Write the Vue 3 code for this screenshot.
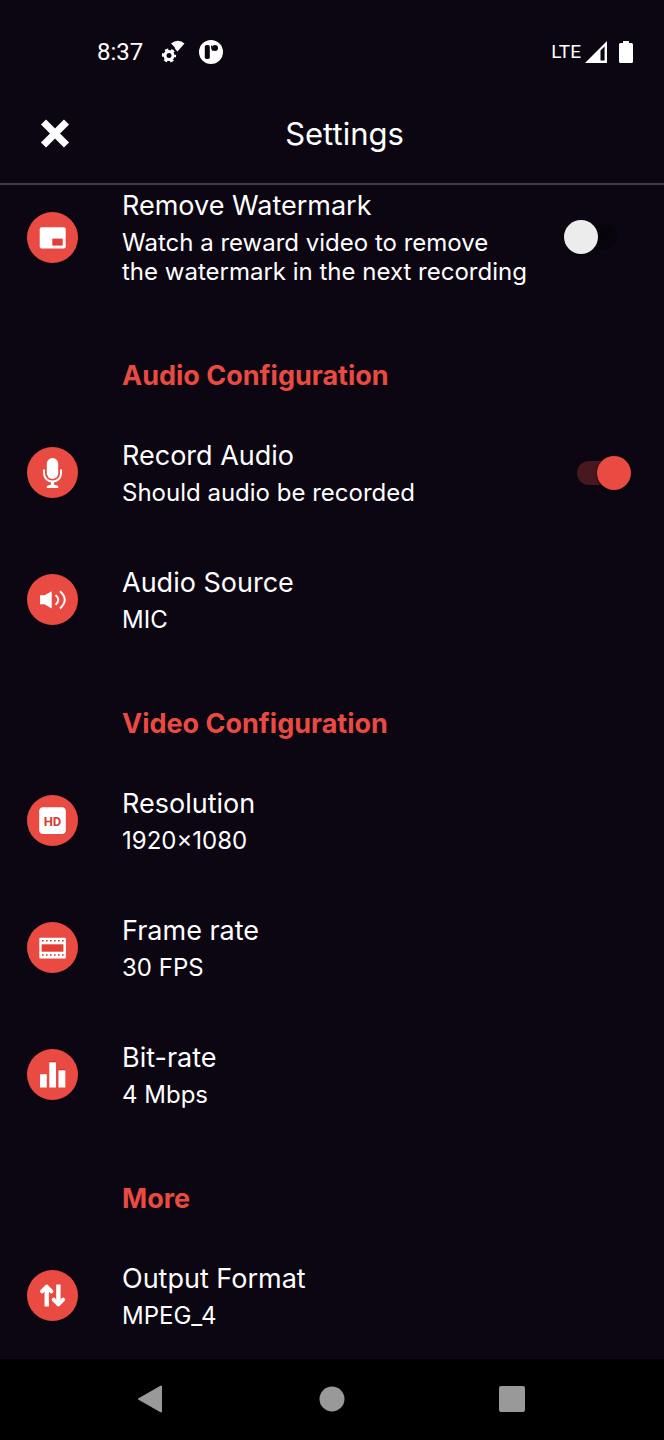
<template>
  <div class="screen">
    <div class="status-bar">
      <div class="status-group">
        <span class="clock">8:37</span>
        <svg class="status-icon gear" viewBox="0 0 24 24" aria-hidden="true">
          <path d="M10 3.5Q17 -2 23.5 3.5L16.5 11.5L14.5 9.5L13.5 7Z" fill="#fff" />
          <circle cx="8" cy="15.5" r="4" fill="none" stroke="#fff" stroke-width="3" />
          <circle cx="8" cy="15.5" r="6" fill="none" stroke="#fff" stroke-width="2.2" stroke-dasharray="3.3 2.98" stroke-dashoffset="1.6" />
        </svg>
        <svg class="status-icon badge" viewBox="0 0 24 24" aria-hidden="true">
          <circle cx="12" cy="12" r="12" fill="#fff" />
          <rect x="5.8" y="5" width="5" height="14" rx="1.8" fill="#0c0612" />
          <path d="M12.5 5.5Q12.5 9 14 10.5" fill="none" stroke="#0c0612" stroke-width="1.2" />
          <circle cx="16" cy="8" r="3" fill="#0c0612" />
        </svg>
      </div>
      <div class="status-group">
        <span class="network">LTE</span>
        <svg class="status-icon signal" viewBox="0 0 22 22" aria-hidden="true">
          <path d="M0 22L22 0V22Z" fill="#fff" />
          <path d="M15.5 9.5L19.6 5.5V19.6H15.5Z" fill="#0c0612" />
        </svg>
        <svg class="status-icon battery" viewBox="0 0 14 22" aria-hidden="true">
          <path d="M4 0H10V2H12.5Q14 2 14 3.5V20.5Q14 22 12.5 22H1.5Q0 22 0 20.5V3.5Q0 2 1.5 2H4Z" fill="#fff" />
        </svg>
      </div>
    </div>

    <header class="header">
      <button class="close" type="button" aria-label="Close">
        <svg viewBox="0 0 30 30" aria-hidden="true">
          <path d="M3.5 3L26.5 26M26.5 3L3.5 26" fill="none" stroke="#fff" stroke-width="7.2" />
        </svg>
      </button>
      <h1>Settings</h1>
    </header>

    <main class="settings">
      <section v-for="(group, index) in groups" :key="index">
        <h2 v-if="group.title" class="group-title">{{ group.title }}</h2>
        <component
          :is="item.toggle ? 'label' : 'button'"
          v-for="item in group.items"
          :key="item.icon"
          class="row"
          :class="{ 'row-scrolled': item.icon === 'watermark' }"
          :type="item.toggle ? null : 'button'"
        >
          <svg class="row-icon" viewBox="0 0 51 51" aria-hidden="true">
            <circle cx="25.5" cy="25.5" r="25.5" fill="#e94b42" />
            <g v-if="item.icon === 'watermark'">
              <rect x="12.7" y="15.2" width="26" height="21.4" rx="2" fill="#fff" />
              <rect x="25.3" y="26.6" width="10.4" height="7" fill="#e23f37" />
            </g>
            <g v-else-if="item.icon === 'mic'" fill="#fff">
              <rect x="19.8" y="11" width="11.4" height="21" rx="5.7" />
              <path d="M17 22.5V26.5A8.5 8 0 0 0 34 26.5V22.5" fill="none" stroke="#fff" stroke-width="2" />
              <path d="M24 34H27V37.5L31.2 39V41H19.8V39L24 37.5Z" />
            </g>
            <g v-else-if="item.icon === 'speaker'">
              <path d="M13 21.3H17.5L24.7 17.3V34.5L17.5 30.3H13Z" fill="#fff" />
              <path d="M28.5 21Q34 25.8 28.5 30.8M33 17.3Q42.5 25.8 33 34.5" fill="none" stroke="#fff" stroke-width="2" />
            </g>
            <g v-else-if="item.icon === 'hd'">
              <rect x="12.2" y="12.3" width="26.6" height="26.6" rx="4" fill="#fff" />
              <text class="hd-text" x="25.5" y="30.5">HD</text>
            </g>
            <g v-else-if="item.icon === 'film'">
              <rect x="12.3" y="15.8" width="26.6" height="20.8" rx="1" fill="#fff" />
              <rect x="14.6" y="22.3" width="21.8" height="7.4" fill="#e23f37" />
              <path d="M15 18.8H37M15 33H37" stroke="#c8352e" stroke-width="1.6" stroke-dasharray="1.6 2.4" />
            </g>
            <g v-else-if="item.icon === 'bars'">
              <path d="M22.3 12.4H29V14H22.3ZM31.5 20.4H38.3V22H31.5Z" fill="#c01d1a" />
              <path d="M13 25.3H19.8V38.6H13ZM22.3 13.2H29V38.6H22.3ZM31.5 21.2H38.3V38.6H31.5Z" fill="#fff" />
            </g>
            <g v-else fill="none" stroke="#fff" stroke-width="4.4" stroke-linejoin="round">
              <path d="M19.7 36.5V18M31.4 14.5V33" />
              <path d="M15 21.3L19.7 16.6L24.4 21.3M26.7 29.7L31.4 34.4L36.1 29.7" stroke-width="4" stroke-linecap="round" />
            </g>
          </svg>
          <span class="row-text">
            <span class="row-title">{{ item.title }}</span>
            <span class="row-summary">{{ item.summary }}</span>
          </span>
          <input v-if="item.toggle" v-model="item.on" class="switch" type="checkbox" />
        </component>
      </section>
    </main>

    <nav class="nav-bar">
      <button type="button" aria-label="Back">
        <svg viewBox="0 0 28 28" aria-hidden="true">
          <path d="M1 14L23 1.5V26.5Z" fill="#999" stroke="#999" stroke-width="2" stroke-linejoin="round" />
        </svg>
      </button>
      <button type="button" aria-label="Home">
        <svg viewBox="0 0 28 28" aria-hidden="true"><circle cx="14" cy="14" r="12.5" fill="#999" /></svg>
      </button>
      <button type="button" aria-label="Recent apps">
        <svg viewBox="0 0 28 28" aria-hidden="true"><rect x="1" y="1" width="26" height="26" rx="2" fill="#999" /></svg>
      </button>
    </nav>
  </div>
</template>

<script setup>
import { reactive } from 'vue'

const groups = reactive([
  {
    title: '',
    items: [
      {
        icon: 'watermark',
        title: 'Remove Watermark',
        summary: 'Watch a reward video to remove\nthe watermark in the next recording',
        toggle: true,
        on: false
      }
    ]
  },
  {
    title: 'Audio Configuration',
    items: [
      { icon: 'mic', title: 'Record Audio', summary: 'Should audio be recorded', toggle: true, on: true },
      { icon: 'speaker', title: 'Audio Source', summary: 'MIC' }
    ]
  },
  {
    title: 'Video Configuration',
    items: [
      { icon: 'hd', title: 'Resolution', summary: '1920×1080' },
      { icon: 'film', title: 'Frame rate', summary: '30 FPS' },
      { icon: 'bars', title: 'Bit-rate', summary: '4 Mbps' }
    ]
  },
  {
    title: 'More',
    items: [
      { icon: 'arrows', title: 'Output Format', summary: 'MPEG_4' }
    ]
  }
])
</script>

<style>
body {
  background: #0c0612;
}
</style>

<style scoped>
.screen {
  display: flex;
  flex-direction: column;
  min-height: 100vh;
  background: #0c0612;
  color: #fff;
  font-family: Inter, sans-serif;
}

button {
  border: 0;
  padding: 0;
  background: none;
  color: inherit;
  font: inherit;
  cursor: pointer;
}

svg {
  display: block;
}

.status-bar {
  display: flex;
  align-items: center;
  justify-content: space-between;
  height: 84px;
  padding: 19px 31px 0 97px;
  box-sizing: border-box;
  font-family: Roboto, sans-serif;
}

.status-group {
  display: flex;
  align-items: center;
}

.clock {
  font-size: 24px;
  line-height: 28px;
}

.network {
  font-size: 19px;
  line-height: 28px;
}

.status-icon {
  height: 24px;
}

.gear {
  width: 24px;
  margin-left: 18px;
}

.badge {
  width: 24px;
  margin-left: 14px;
}

.signal {
  width: 22px;
  height: 22px;
  margin-left: 4px;
}

.battery {
  width: 14px;
  height: 22px;
  margin-left: 12px;
}

.header {
  display: flex;
  align-items: center;
  height: 101px;
  padding: 0 61px 0 24px;
  box-sizing: border-box;
  border-bottom: 2px solid #403c45;
}

.close {
  display: flex;
  justify-content: center;
  width: 62px;
}

.close svg {
  width: 30px;
  height: 30px;
}

.header h1 {
  flex: 1;
  margin: 0;
  font-size: 31px;
  font-weight: 400;
  line-height: 40px;
  text-align: center;
}

.settings {
  flex: 1;
}

.group-title {
  margin: 0;
  padding: 44px 32px 16px 122px;
  color: #e94b42;
  font-size: 27px;
  font-weight: 700;
  line-height: 34px;
}

.row {
  display: flex;
  align-items: center;
  width: 100%;
  padding: 29px 33px 29px 27px;
  box-sizing: border-box;
  text-align: left;
  cursor: pointer;
}

.row-scrolled {
  padding-top: 3px;
}

.row-icon {
  flex: none;
  width: 51px;
  height: 51px;
}

.hd-text {
  fill: #d93a33;
  font-family: Roboto, sans-serif;
  font-size: 13px;
  font-weight: 700;
  text-anchor: middle;
}

.row-text {
  display: flex;
  flex: 1;
  flex-direction: column;
  gap: 5px;
  margin-left: 44px;
}

.row-title {
  font-size: 27px;
  line-height: 35px;
}

.row-summary {
  font-size: 24px;
  line-height: 29px;
  white-space: pre-line;
}

.switch {
  position: relative;
  flex: none;
  width: 67px;
  height: 34px;
  margin: 0;
  appearance: none;
  cursor: pointer;
}

.switch::before {
  content: '';
  position: absolute;
  inset: 5px 13px;
  border-radius: 12px;
  background: #08040b;
}

.switch::after {
  content: '';
  position: absolute;
  top: 0;
  left: 0;
  width: 34px;
  height: 34px;
  border-radius: 50%;
  background: #ececec;
  box-shadow: 0 1px 3px rgba(0, 0, 0, 0.5);
}

.switch:checked::before {
  background: #47181e;
}

.switch:checked::after {
  left: auto;
  right: 0;
  background: #e94b42;
}

.nav-bar {
  display: grid;
  grid-template-columns: repeat(3, 27%);
  gap: 1px;
  justify-content: center;
  align-items: center;
  height: 81px;
  padding-bottom: 1px;
  box-sizing: border-box;
  background: #000;
}

.nav-bar button {
  display: flex;
  justify-content: center;
}

.nav-bar svg {
  width: 28px;
  height: 28px;
}
</style>
